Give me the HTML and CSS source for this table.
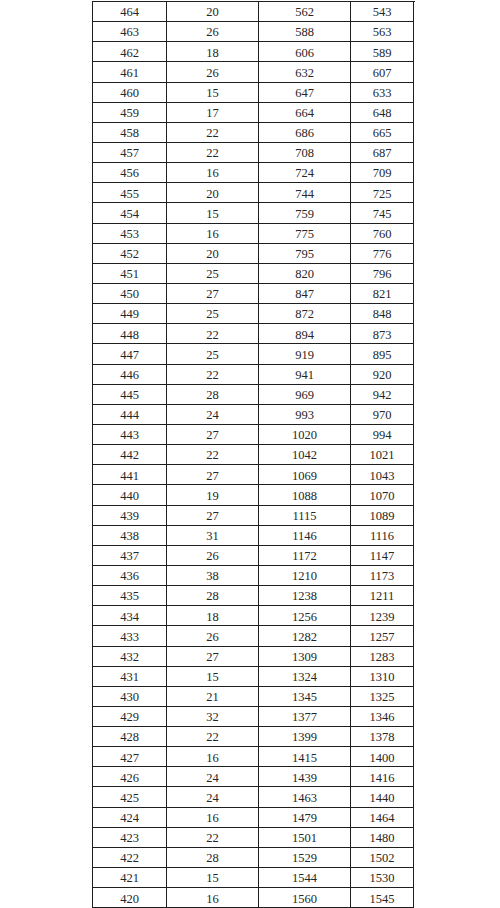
FILE: index.html
```html
<!DOCTYPE html>
<html>
<head>
<meta charset="utf-8">
<link rel="stylesheet" href="styles.css">
</head>
<body>
<div class="table">
<div class="cell">464</div><div class="cell">20</div><div class="cell">562</div><div class="cell">543</div>
<div class="cell">463</div><div class="cell">26</div><div class="cell">588</div><div class="cell">563</div>
<div class="cell">462</div><div class="cell">18</div><div class="cell">606</div><div class="cell">589</div>
<div class="cell">461</div><div class="cell">26</div><div class="cell">632</div><div class="cell">607</div>
<div class="cell">460</div><div class="cell">15</div><div class="cell">647</div><div class="cell">633</div>
<div class="cell">459</div><div class="cell">17</div><div class="cell">664</div><div class="cell">648</div>
<div class="cell">458</div><div class="cell">22</div><div class="cell">686</div><div class="cell">665</div>
<div class="cell">457</div><div class="cell">22</div><div class="cell">708</div><div class="cell">687</div>
<div class="cell">456</div><div class="cell">16</div><div class="cell">724</div><div class="cell">709</div>
<div class="cell">455</div><div class="cell">20</div><div class="cell">744</div><div class="cell">725</div>
<div class="cell">454</div><div class="cell">15</div><div class="cell">759</div><div class="cell">745</div>
<div class="cell">453</div><div class="cell">16</div><div class="cell">775</div><div class="cell">760</div>
<div class="cell">452</div><div class="cell">20</div><div class="cell">795</div><div class="cell">776</div>
<div class="cell">451</div><div class="cell">25</div><div class="cell">820</div><div class="cell">796</div>
<div class="cell">450</div><div class="cell">27</div><div class="cell">847</div><div class="cell">821</div>
<div class="cell">449</div><div class="cell">25</div><div class="cell">872</div><div class="cell">848</div>
<div class="cell">448</div><div class="cell">22</div><div class="cell">894</div><div class="cell">873</div>
<div class="cell">447</div><div class="cell">25</div><div class="cell">919</div><div class="cell">895</div>
<div class="cell">446</div><div class="cell">22</div><div class="cell">941</div><div class="cell">920</div>
<div class="cell">445</div><div class="cell">28</div><div class="cell">969</div><div class="cell">942</div>
<div class="cell">444</div><div class="cell">24</div><div class="cell">993</div><div class="cell">970</div>
<div class="cell">443</div><div class="cell">27</div><div class="cell">1020</div><div class="cell">994</div>
<div class="cell">442</div><div class="cell">22</div><div class="cell">1042</div><div class="cell">1021</div>
<div class="cell">441</div><div class="cell">27</div><div class="cell">1069</div><div class="cell">1043</div>
<div class="cell">440</div><div class="cell">19</div><div class="cell">1088</div><div class="cell">1070</div>
<div class="cell">439</div><div class="cell">27</div><div class="cell">1115</div><div class="cell">1089</div>
<div class="cell">438</div><div class="cell">31</div><div class="cell">1146</div><div class="cell">1116</div>
<div class="cell">437</div><div class="cell">26</div><div class="cell">1172</div><div class="cell">1147</div>
<div class="cell">436</div><div class="cell">38</div><div class="cell">1210</div><div class="cell">1173</div>
<div class="cell">435</div><div class="cell">28</div><div class="cell">1238</div><div class="cell">1211</div>
<div class="cell">434</div><div class="cell">18</div><div class="cell">1256</div><div class="cell">1239</div>
<div class="cell">433</div><div class="cell">26</div><div class="cell">1282</div><div class="cell">1257</div>
<div class="cell">432</div><div class="cell">27</div><div class="cell">1309</div><div class="cell">1283</div>
<div class="cell">431</div><div class="cell">15</div><div class="cell">1324</div><div class="cell">1310</div>
<div class="cell">430</div><div class="cell">21</div><div class="cell">1345</div><div class="cell">1325</div>
<div class="cell">429</div><div class="cell">32</div><div class="cell">1377</div><div class="cell">1346</div>
<div class="cell">428</div><div class="cell">22</div><div class="cell">1399</div><div class="cell">1378</div>
<div class="cell">427</div><div class="cell">16</div><div class="cell">1415</div><div class="cell">1400</div>
<div class="cell">426</div><div class="cell">24</div><div class="cell">1439</div><div class="cell">1416</div>
<div class="cell">425</div><div class="cell">24</div><div class="cell">1463</div><div class="cell">1440</div>
<div class="cell">424</div><div class="cell">16</div><div class="cell">1479</div><div class="cell">1464</div>
<div class="cell">423</div><div class="cell">22</div><div class="cell">1501</div><div class="cell">1480</div>
<div class="cell">422</div><div class="cell">28</div><div class="cell">1529</div><div class="cell">1502</div>
<div class="cell">421</div><div class="cell">15</div><div class="cell">1544</div><div class="cell">1530</div>
<div class="cell">420</div><div class="cell">16</div><div class="cell">1560</div><div class="cell">1545</div>
<div class="cell"></div><div class="cell"></div><div class="cell"></div><div class="cell"></div>
</div>
</body>
</html>
```
FILE: styles.css
```css
html, body {
  margin: 0;
  padding: 0;
  background: #ffffff;
}
body {
  font-family: "Liberation Serif", "Times New Roman", serif;
  font-size: 12.5px;
  color: #262626;
}
.table {
  margin: 1px 0 0 92px;
  width: 322px;
  display: grid;
  grid-template-columns: 74px 92px 92px 63px;
  grid-auto-rows: 20.15px;
  border-left: 1px solid #1e1e1e;
  border-top: 1px solid #1e1e1e;
}
.cell {
  box-sizing: border-box;
  border-right: 1px solid #1e1e1e;
  border-bottom: 1px solid #1e1e1e;
  display: flex;
  align-items: center;
  justify-content: center;
  padding-top: 2px;
  line-height: 1;
}
```
